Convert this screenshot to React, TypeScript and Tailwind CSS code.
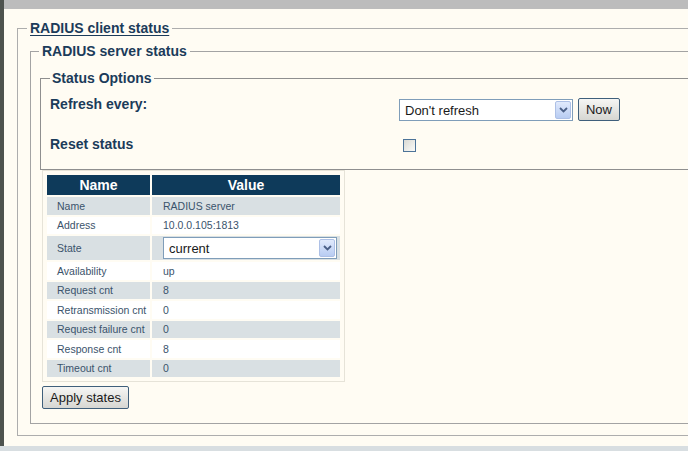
import React from "react";

function Chevron() {
  return (
    <svg width="9" height="6" viewBox="0 0 9 6" className="block">
      <path d="M1 1 L4.5 4.5 L8 1" fill="none" stroke="#4a5f86" strokeWidth="1.8" />
    </svg>
  );
}

function FakeSelect({ text, h }: { text: string; h: string }) {
  return (
    <div className={`flex w-[174px] ${h} items-center border border-[#7f9db9] bg-white pl-[5px] pr-[1px]`}>
      <span className="flex-1 text-[13px] leading-none text-[#1a1a1a]">{text}</span>
      <div className="flex h-[calc(100%-2px)] w-[16px] items-center justify-center rounded-[2px] border border-[#adc0e6] bg-gradient-to-b from-[#e1eafc] to-[#b8ccf2]">
        <Chevron />
      </div>
    </div>
  );
}

const rows: { k: string; v: string; gray: boolean; select?: boolean }[] = [
  { k: "Name", v: "RADIUS server", gray: true },
  { k: "Address", v: "10.0.0.105:1813", gray: false },
  { k: "State", v: "current", gray: true, select: true },
  { k: "Availability", v: "up", gray: false },
  { k: "Request cnt", v: "8", gray: true },
  { k: "Retransmission cnt", v: "0", gray: false },
  { k: "Request failure cnt", v: "0", gray: true },
  { k: "Response cnt", v: "8", gray: false },
  { k: "Timeout cnt", v: "0", gray: true },
];

export default function App() {
  return (
    <div className="flex h-[451px] w-[688px] flex-col overflow-hidden bg-[#fffcf3] font-['Liberation_Sans',Arial,sans-serif]">
      <div className="flex min-h-0 flex-1">
        <div className="w-[4px] bg-[#4e534e]" />
        <div className="flex min-w-0 flex-1 flex-col">
          <div className="h-[9px] bg-[#bcbcbc]" />
          <div className="min-h-0 flex-1">
            <fieldset className="ml-[13px] mt-[11px] w-[720px] border border-[#adadad] pb-[11px] pl-[9px] pt-[7px]">
              <legend className="px-[3px] text-[14px] font-bold leading-[16px] text-[#1b3b5a] underline underline-offset-[2px]">
                RADIUS client status
              </legend>
              <fieldset className="ml-[3px] border border-[#a3a3a3] pb-[14px] pl-[8px] pt-[11px]">
                <legend className="px-[3px] text-[14px] font-bold leading-[16px] text-[#1b3b5a]">
                  RADIUS server status
                </legend>
                <fieldset className="ml-[1px] border border-[#8f8f8f] pb-[17px] pl-[9px] pt-[10px]">
                  <legend className="px-[2px] text-[14px] font-bold leading-[16px] text-[#1b3b5a]">
                    Status Options
                  </legend>
                  <div className="flex items-start">
                    <div className="w-[349px] text-[14px] font-bold leading-[16px] text-[#1b3b5a]">Refresh every:</div>
                    <div className="mt-[3px] flex items-start gap-[5px]">
                      <FakeSelect text="Don't refresh" h="h-[22px]" />
                      <button className="-mt-[1px] h-[23px] w-[42px] rounded-[2px] border border-[#3f5f7b] bg-gradient-to-b from-[#f6f6f4] to-[#d6d6d2] text-[13px] leading-none text-[#1a1a1a]">
                        Now
                      </button>
                    </div>
                  </div>
                  <div className="mt-[15px] flex items-start">
                    <div className="w-[349px] text-[14px] font-bold leading-[16px] text-[#1b3b5a]">Reset status</div>
                    <div className="ml-[4px] mt-[3px] h-[13px] w-[13px] border border-[#4c7398] bg-gradient-to-br from-[#d9d9d3] to-[#fbfbf8]" />
                  </div>
                </fieldset>

                <div className="ml-[3px] w-[303px] border border-[#e6e3d8] p-[2px]">
                  <table className="w-[297px] border-separate border-spacing-[2px]">
                    <thead>
                      <tr className="h-[20px] bg-[#0e3a5a] text-[14px] font-bold leading-none text-white">
                        <th className="w-[103px] p-0 text-center">Name</th>
                        <th className="w-[188px] p-0 text-center">Value</th>
                      </tr>
                    </thead>
                    <tbody>
                      {rows.map((r) => (
                        <tr
                          key={r.k}
                          className={`${r.select ? "h-[24px]" : "h-[17.5px]"} ${r.gray ? "bg-[#d9e0e3]" : "bg-white"} text-[10.5px] leading-none text-[#3a536b]`}
                        >
                          <td className="p-0 pl-[10px] whitespace-nowrap">{r.k}</td>
                          <td className="p-0 pl-[11px]">
                            {r.select ? <FakeSelect text={r.v} h="h-[22px]" /> : r.v}
                          </td>
                        </tr>
                      ))}
                    </tbody>
                  </table>
                </div>
                <button className="ml-[3px] mt-[4px] h-[23px] w-[87px] rounded-[2px] border border-[#3f5f7b] bg-gradient-to-b from-[#f6f6f4] to-[#d6d6d2] text-[13px] leading-none text-[#1a1a1a]">
                  Apply states
                </button>
              </fieldset>
            </fieldset>
          </div>
        </div>
      </div>
      <div className="h-[5px] bg-[#d8dee1]" />
    </div>
  );
}
